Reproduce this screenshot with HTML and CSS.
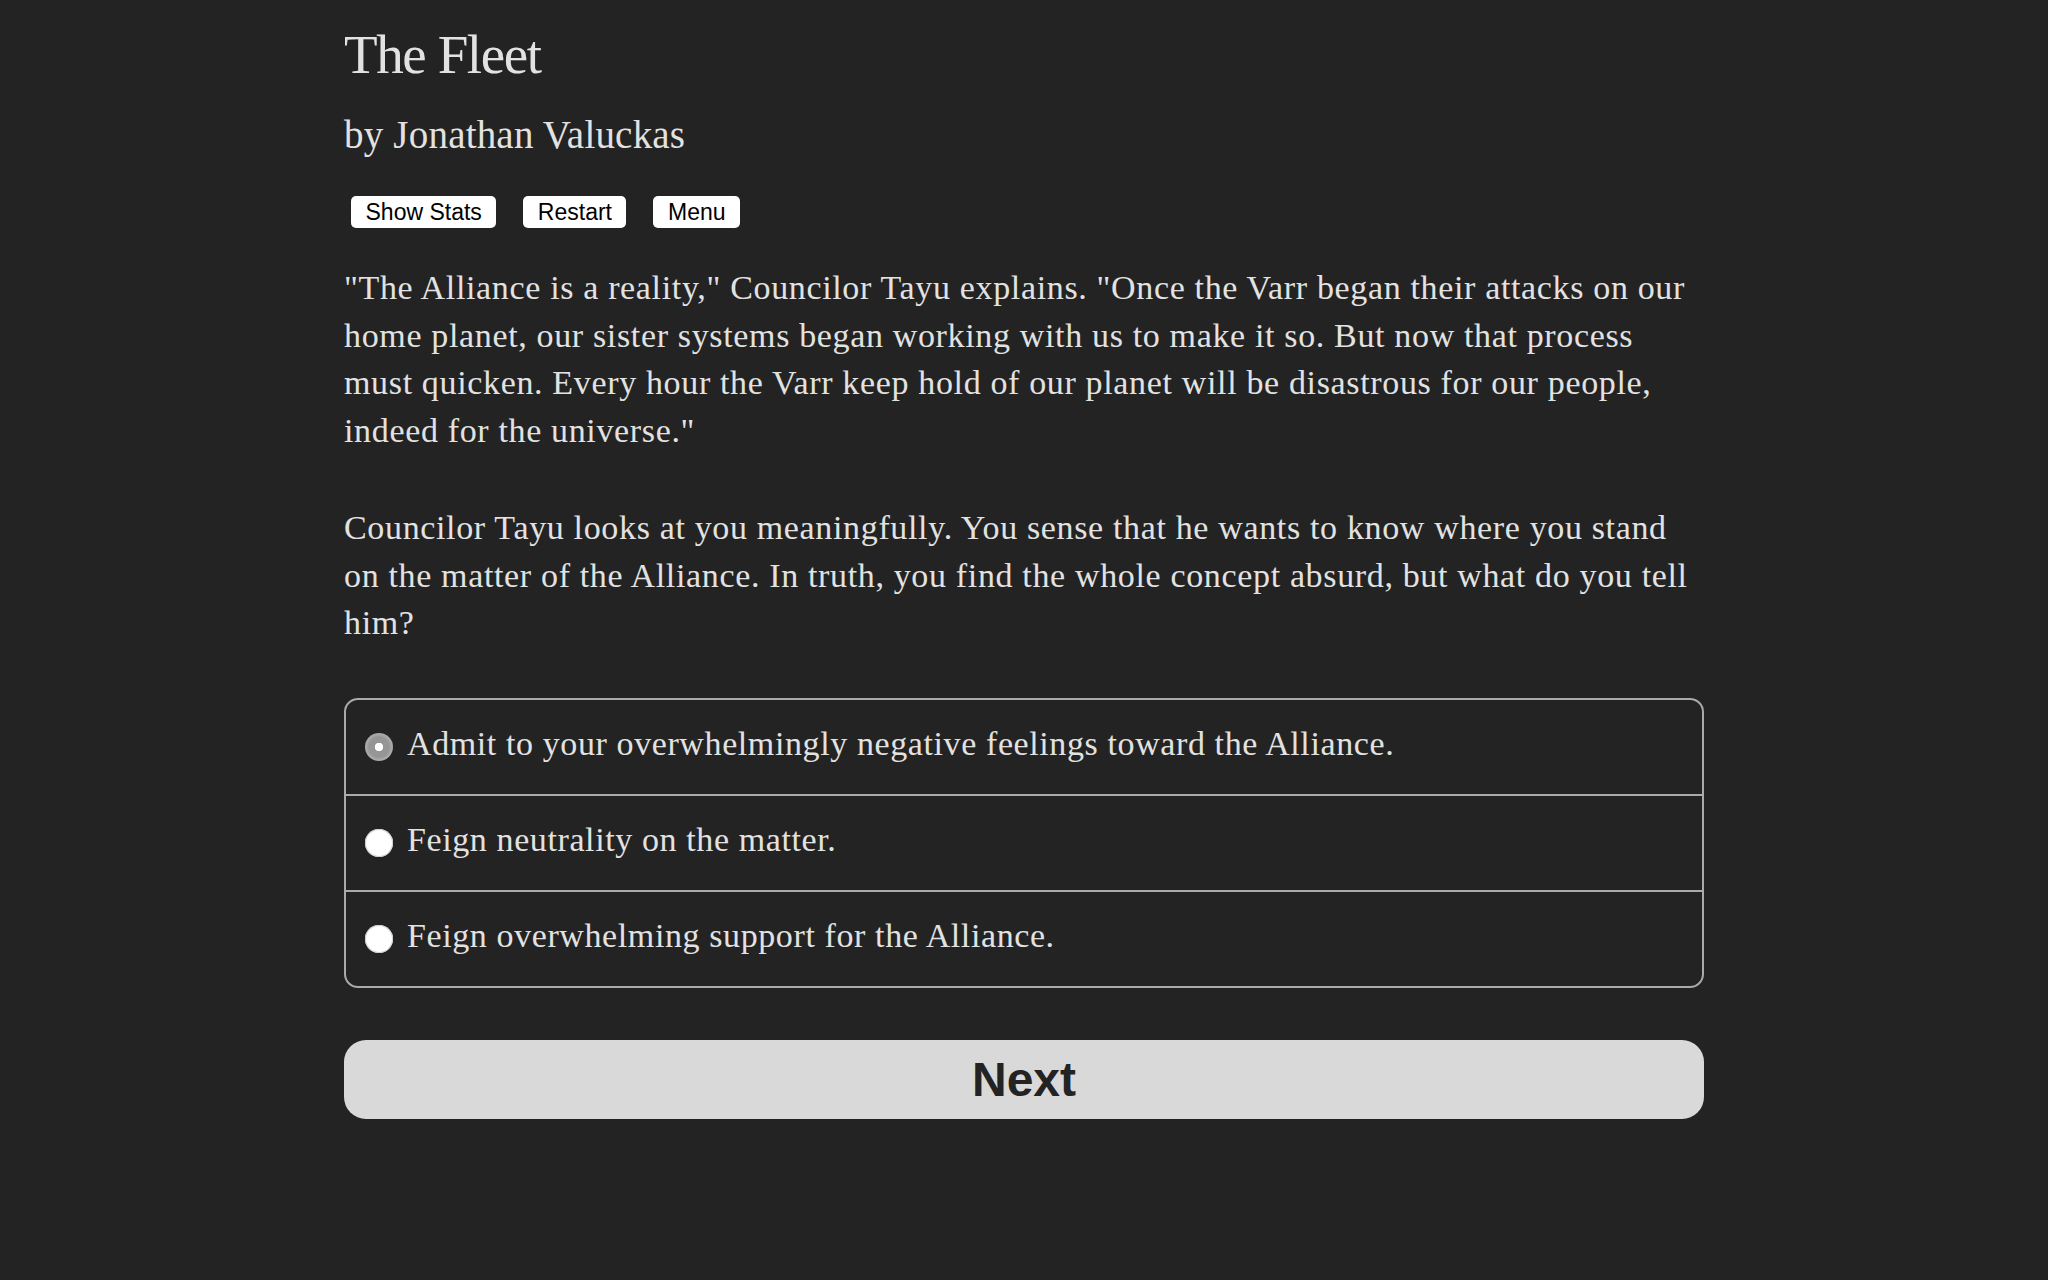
FILE: index.html
```html
<!DOCTYPE html>
<html lang="en">
<head>
<meta charset="utf-8">
<title>The Fleet</title>
<link rel="stylesheet" href="styles.css">
</head>
<body>
<main class="page">
  <h1 class="title">The Fleet</h1>
  <h2 class="author">by Jonathan Valuckas</h2>
  <div class="toolbar">
    <button class="tool-btn">Show Stats</button>
    <button class="tool-btn">Restart</button>
    <button class="tool-btn">Menu</button>
  </div>
  <p class="story">"The Alliance is a reality," Councilor Tayu explains. "Once the Varr began their attacks on our home planet, our sister systems began working with us to make it so. But now that process must quicken. Every hour the Varr keep hold of our planet will be disastrous for our people, indeed for the universe."</p>
  <p class="story">Councilor Tayu looks at you meaningfully. You sense that he wants to know where you stand on the matter of the Alliance. In truth, you find the whole concept absurd, but what do you tell him?</p>
  <form class="choices">
    <label class="choice">
      <input class="radio" type="radio" name="c" checked>
      <span class="choice-text">Admit to your overwhelmingly negative feelings toward the Alliance.</span>
    </label>
    <label class="choice">
      <input class="radio" type="radio" name="c">
      <span class="choice-text">Feign neutrality on the matter.</span>
    </label>
    <label class="choice">
      <input class="radio" type="radio" name="c">
      <span class="choice-text">Feign overwhelming support for the Alliance.</span>
    </label>
  </form>
  <button class="next-btn">Next</button>
</main>
</body>
</html>
```
FILE: styles.css
```css
html, body {
  margin: 0;
  padding: 0;
  background: #232323;
}
body {
  color: #e2e2e2;
  font-family: "Liberation Serif", "Times New Roman", serif;
}
.page {
  width: 1360px;
  margin: 0 auto;
  padding-top: 23px;
  display: flex;
  flex-direction: column;
  align-items: stretch;
}
.title {
  margin: 0;
  font-size: 55px;
  line-height: 64px;
  font-weight: normal;
  letter-spacing: -1.4px;
}
.author {
  margin: 24px 0 0;
  font-size: 39px;
  line-height: 48px;
  font-weight: normal;
  letter-spacing: 0.2px;
}
.toolbar {
  display: flex;
  gap: 27px;
  margin: 37px 0 0 7px;
}
.tool-btn {
  font-family: "Liberation Sans", Arial, sans-serif;
  font-size: 23px;
  line-height: 32px;
  height: 32px;
  padding: 0 14.5px;
  border: none;
  border-radius: 5px;
  background: #ffffff;
  color: #000000;
}
.story {
  margin: 36px 0 0;
  font-size: 34px;
  line-height: 47.5px;
  letter-spacing: 0.65px;
}
.story + .story {
  margin-top: 50px;
}
.choices {
  margin: 51px 0 0;
  border: 2px solid #aaaaaa;
  border-radius: 14px;
  display: flex;
  flex-direction: column;
}
.choice {
  display: flex;
  align-items: center;
  height: 94px;
  padding-left: 19px;
  gap: 14px;
  font-size: 34px;
  line-height: 47.5px;
  letter-spacing: 0.6px;
}
.choice + .choice {
  border-top: 2px solid #aaaaaa;
}
.choice-text {
  padding-bottom: 6px;
}
.radio {
  appearance: none;
  -webkit-appearance: none;
  margin: 0;
  width: 28px;
  height: 28px;
  border-radius: 50%;
  background: #ffffff;
  box-shadow: inset 0 0 0 1px #d0d0d0;
  flex: none;
}
.radio:checked {
  background: radial-gradient(circle, #ffffff 0 4px, #959595 4.5px 10px, #a8a8a8 12.5px);
  box-shadow: none;
}
.next-btn {
  margin-top: 52px;
  height: 79px;
  border: none;
  border-radius: 22px;
  background: #d9d9d9;
  color: #232323;
  font-family: "Liberation Sans", Arial, sans-serif;
  font-weight: bold;
  font-size: 48px;
  line-height: 79px;
  padding: 0;
}
```
